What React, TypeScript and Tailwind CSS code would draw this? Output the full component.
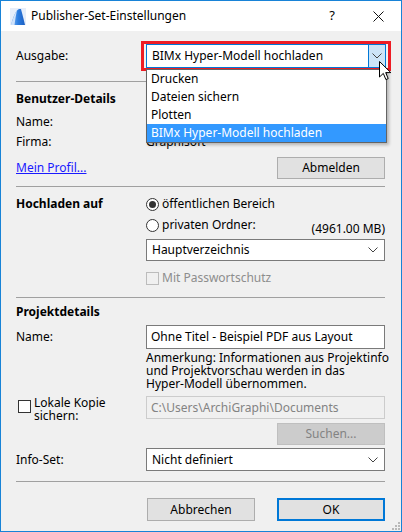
import React from "react";

const FONT = { fontFamily: '"Noto Sans", "Open Sans", Arial, sans-serif' };

function Chevron({ className = "" }: { className?: string }) {
  return (
    <svg width="10" height="6" viewBox="0 0 10 6" className={className}>
      <path d="M0.5 0.5 L5 5 L9.5 0.5" fill="none" stroke="#444" strokeWidth="1" />
    </svg>
  );
}

function Select({ value, h = "h-[22px]" }: { value: string; h?: string }) {
  return (
    <div className={`${h} flex-1 flex items-center justify-between bg-white border border-[#7a7a7a] pl-[5px] pr-[6px]`}>
      <span>{value}</span>
      <Chevron />
    </div>
  );
}

function Button({ label, primary, disabled }: { label: string; primary?: boolean; disabled?: boolean }) {
  const cls = primary
    ? "border-2 border-[#0078d7] bg-[#e1e1e1]"
    : disabled
    ? "border border-[#bfbfbf] bg-[#cccccc] text-[#838383]"
    : "border border-[#adadad] bg-[#e1e1e1]";
  return <div className={`w-[108px] h-full flex items-center justify-center ${cls}`}>{label}</div>;
}

function Radio({ checked }: { checked?: boolean }) {
  return (
    <div className="w-[13px] h-[13px] rounded-full border border-[#333] bg-white flex items-center justify-center shrink-0">
      {checked && <div className="w-[7px] h-[7px] rounded-full bg-[#333]" />}
    </div>
  );
}

function Sep({ mt }: { mt: string }) {
  return <div className={`${mt} h-px bg-[#a0a0a0]`} />;
}

function AppIcon() {
  return (
    <svg width="16" height="17" viewBox="0 0 16 17">
      <defs>
        <linearGradient id="g" x1="0" y1="0" x2="1" y2="0">
          <stop offset="0" stopColor="#7fb4f0" />
          <stop offset="0.5" stopColor="#2b7de0" />
          <stop offset="1" stopColor="#1d5fc2" />
        </linearGradient>
      </defs>
      <rect x="0" y="0" width="16" height="17" fill="#e6eefa" />
      <path d="M1 17 C3 9 6 2 9 1 L11 1 C12 5 14 12 15 17 Z" fill="url(#g)" />
      <path d="M1 17 C3 10 5 5 7 2 C6 7 5 12 4.5 17 Z" fill="#cfe2fb" />
    </svg>
  );
}

function Cursor() {
  return (
    <svg width="13" height="20" viewBox="0 0 13 20">
      <path d="M0.5 0.5 L0.5 16 L4.3 12.4 L6.9 18.6 L9.2 17.6 L6.7 11.6 L11.8 11.6 Z" fill="#fff" stroke="#000" strokeWidth="1" strokeLinejoin="round" />
    </svg>
  );
}

export default function App() {
  return (
    <div className="w-[402px] h-[532px] border border-[#1883d7] flex flex-col text-[12px] text-black relative overflow-hidden whitespace-nowrap" style={FONT}>
      {/* title bar */}
      <div className="h-[30px] bg-white flex items-center shrink-0">
        <div className="ml-[9px] mr-[5px] flex"><AppIcon /></div>
        <span className="text-[12px]">Publisher-Set-Einstellungen</span>
        <span className="ml-auto w-[46px] text-center text-[13px]">?</span>
        <div className="w-[46px] flex justify-center">
          <svg width="11" height="11" viewBox="0 0 11 11">
            <path d="M0.5 0.5 L10.5 10.5 M10.5 0.5 L0.5 10.5" stroke="#111" strokeWidth="1" />
          </svg>
        </div>
      </div>

      {/* body */}
      <div className="flex-1 bg-[#f0f0f0] pl-[15px] pr-[16px] leading-[16px] relative">
        <div className="mt-[13px] h-[24px] flex items-center">
          <span className="w-[130px]">Ausgabe:</span>
          <div className="relative flex-1 h-full mr-[-1px]">
            <div className="absolute -left-[5px] -right-[5px] -top-[3px] -bottom-[3px] border-[3px] border-[#ee1c24]" />
            <div className="relative h-full bg-white border border-[#0078d7] flex items-center">
              <span className="pl-[5px] flex-1">BIMx Hyper-Modell hochladen</span>
              <div className="w-[17px] h-full bg-[#cce4f7] border-l border-[#0078d7] flex items-center justify-center">
                <Chevron />
              </div>
            </div>
          </div>
        </div>

        <Sep mt="mt-[13px]" />

        <div className="mt-[9px] font-bold">Benutzer-Details</div>
        <div className="mt-[7px] flex">
          <span className="w-[130px]">Name:</span>
        </div>
        <div className="mt-[4px] flex">
          <span className="w-[130px]">Firma:</span>
          <span>Graphisoft</span>
        </div>
        <div className="mt-[7px] h-[22px] flex items-center">
          <span className="text-[#1a1aff] underline">Mein Profil...</span>
          <div className="ml-auto h-full"><Button label="Abmelden" /></div>
        </div>

        <Sep mt="mt-[7px]" />

        <div className="mt-[9px] flex items-center">
          <span className="w-[130px] font-bold">Hochladen auf</span>
          <Radio checked />
          <span className="ml-[3px]">öffentlichen Bereich</span>
        </div>
        <div className="mt-[5px] h-[20px] flex items-start">
          <span className="w-[130px]" />
          <div className="flex items-center">
            <Radio />
            <span className="ml-[3px]">privaten Ordner:</span>
          </div>
          <span className="ml-auto self-end">(4961.00 MB)</span>
        </div>
        <div className="mt-[2px] flex">
          <span className="w-[130px]" />
          <Select value="Hauptverzeichnis" />
        </div>
        <div className="mt-[9px] flex items-center text-[#8d8d8d]">
          <span className="w-[130px]" />
          <div className="w-[13px] h-[13px] border border-[#bcbcbc]" />
          <span className="ml-[3px]">Mit Passwortschutz</span>
        </div>

        <Sep mt="mt-[11px]" />

        <div className="mt-[6px] font-bold">Projektdetails</div>
        <div className="mt-[5px] h-[24px] flex items-center">
          <span className="w-[130px]">Name:</span>
          <div className="flex-1 h-full bg-white border border-[#7a7a7a] flex items-center pl-[4px]">
            Ohne Titel - Beispiel PDF aus Layout
          </div>
        </div>
        <div className="mt-[2px] ml-[130px] leading-[13px]">
          Anmerkung: Informationen aus Projektinfo
          <br />
          und Projektvorschau werden in das
          <br />
          Hyper-Modell übernommen.
        </div>
        <div className="mt-[6px] flex">
          <div className="w-[130px] flex items-start">
            <div className="ml-[2px] mt-[4px] w-[13px] h-[13px] border border-[#333] bg-white shrink-0" />
            <span className="ml-[3px] leading-[13px]">
              Lokale Kopie
              <br />
              sichern:
            </span>
          </div>
          <div className="flex-1 h-[23px] border border-[#cccccc] bg-[#f0f0f0] text-[#838383] flex items-center pl-[4px]">
            C:\Users\ArchiGraphi\Documents
          </div>
        </div>
        <div className="mt-[1px] h-[22px] flex justify-end">
          <Button label="Suchen..." disabled />
        </div>
        <div className="mt-[3px] flex items-center">
          <span className="w-[130px]">Info-Set:</span>
          <Select value="Nicht definiert" h="h-[23px]" />
        </div>

        <Sep mt="mt-[10px]" />

        <div className="mt-[16px] h-[23px] flex justify-end gap-[22px]">
          <Button label="Abbrechen" />
          <Button label="OK" primary />
        </div>

        {/* dropdown list */}
        <div className="absolute left-[145px] top-[38px] w-[241px] bg-white border border-[#646464] shadow-[2px_2px_3px_rgba(0,0,0,0.25)]">
          {["Drucken", "Dateien sichern", "Plotten"].map((t) => (
            <div key={t} className="h-[18px] flex items-center pl-[4px]">{t}</div>
          ))}
          <div className="h-[18px] flex items-center pl-[4px] bg-[#3399ff] text-white">BIMx Hyper-Modell hochladen</div>
        </div>

        {/* mouse pointer */}
        <div className="absolute left-[378px] top-[30px]"><Cursor /></div>

        {/* resize grip */}
        <svg width="8" height="8" viewBox="0 0 8 8" className="absolute right-[1px] bottom-[1px]">
          {[[6, 0], [6, 3], [3, 3], [6, 6], [3, 6], [0, 6]].map(([x, y]) => (
            <rect key={`${x}-${y}`} x={x} y={y} width="2" height="2" fill="#b8b8b8" />
          ))}
        </svg>
      </div>
    </div>
  );
}
